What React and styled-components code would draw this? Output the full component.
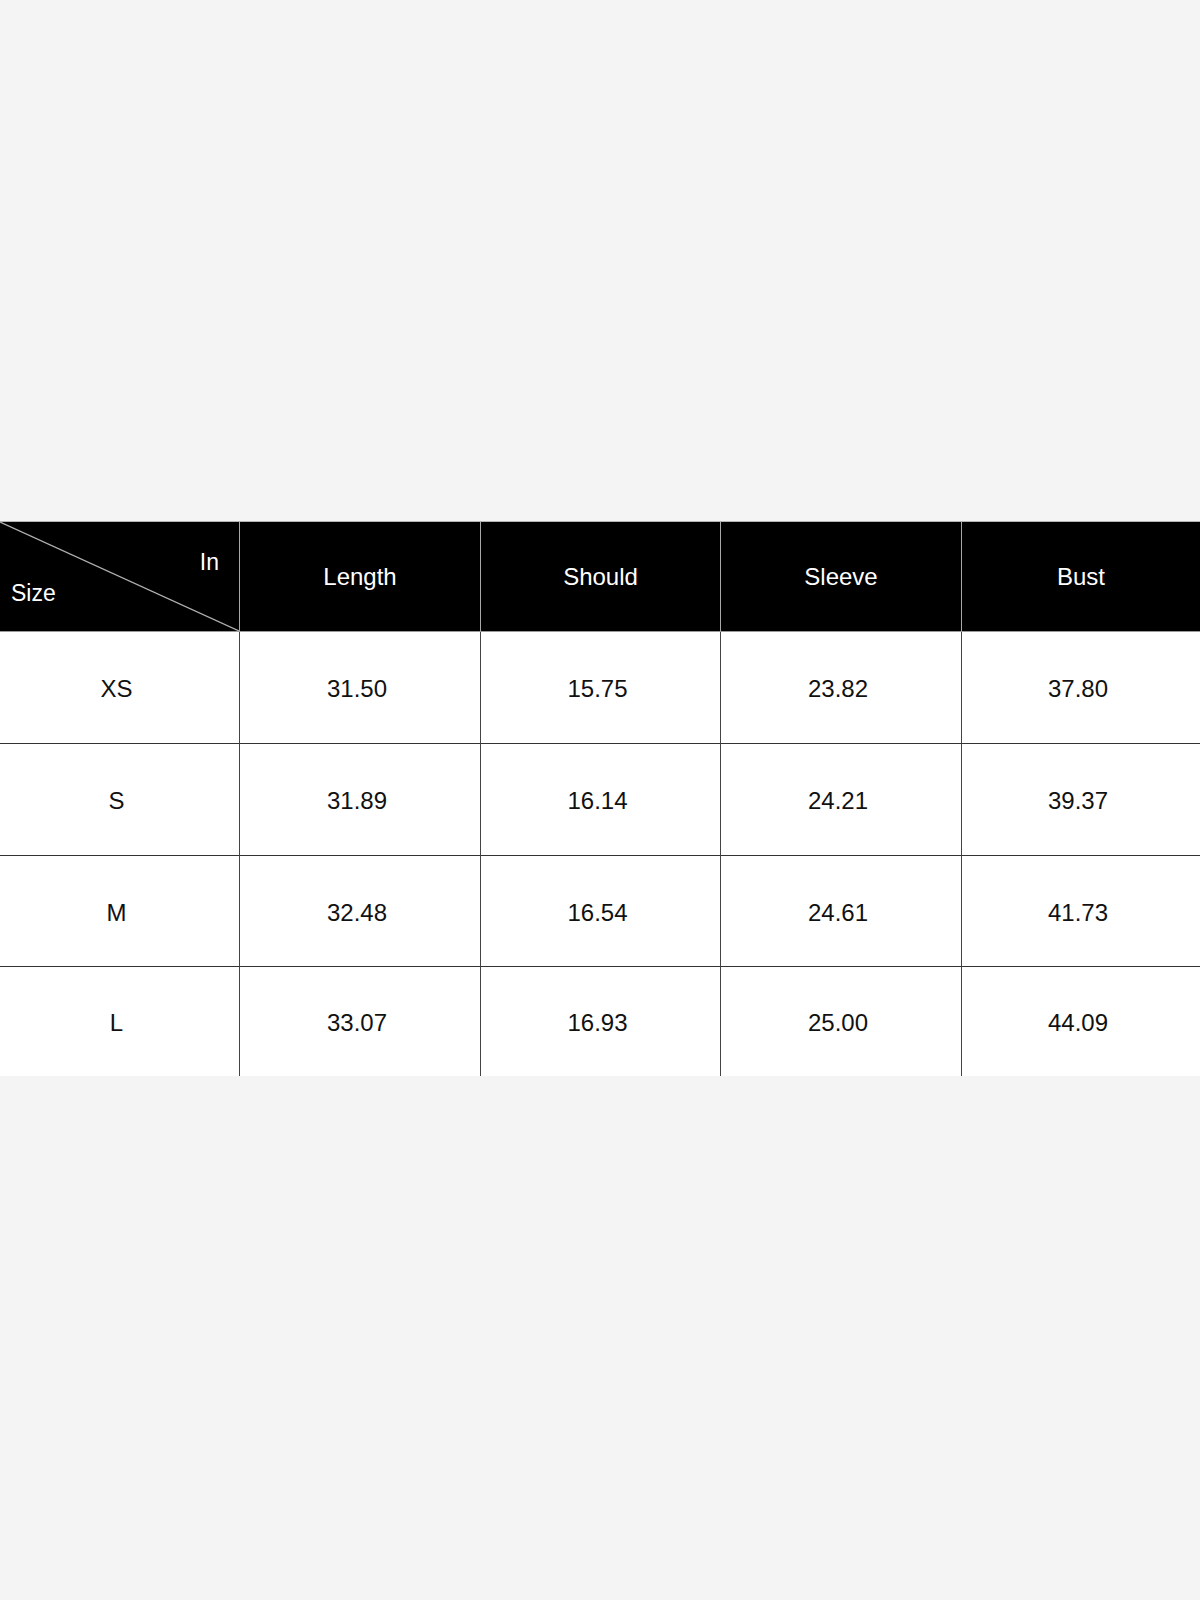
import React from "react";
import styled, { createGlobalStyle } from "styled-components";

const Global = createGlobalStyle`
  html, body { margin: 0; padding: 0; background: #f4f4f4; }
  body { font-family: "Liberation Sans", Arial, sans-serif; }
`;

const Page = styled.div`
  width: 1200px;
  height: 1600px;
  padding-top: 521px;
  box-sizing: border-box;
  background: #f4f4f4;
`;

const Table = styled.div`
  display: grid;
  grid-template-columns: 240px 241px 240px 241px 1fr;
  grid-template-rows: 111px 112px 112px 111px 109px;
  width: 1200px;
  background: #fff;
`;

const HeadCell = styled.div`
  position: relative;
  box-sizing: border-box;
  background: #000;
  color: #fff;
  border-top: 1px solid #b4b4b4;
  border-bottom: 1px solid #9a9a9a;
  border-right: ${(p) => (p.$last ? "none" : "1px solid #a8a8a8")};
  display: flex;
  align-items: center;
  justify-content: center;
  font-size: 24px;
  line-height: 26px;
`;

const CornerCell = styled(HeadCell)`
  flex-direction: column;
  align-items: stretch;
  justify-content: flex-start;
  padding-top: 27px;
  gap: 5px;
  font-size: 23px;
`;

const Diagonal = styled.svg`
  position: absolute;
  inset: 0;
  width: 100%;
  height: 100%;
`;

const CornerLabel = styled.span`
  position: relative;
  display: block;
  text-align: ${(p) => (p.$right ? "right" : "left")};
  padding: ${(p) => (p.$right ? "0 20px 0 0" : "0 0 0 11px")};
`;

const BodyCell = styled.div`
  box-sizing: border-box;
  background: #fff;
  color: #111;
  border-bottom: ${(p) => (p.$lastRow ? "none" : "1px solid #333")};
  border-right: ${(p) => (p.$last ? "none" : "1px solid #444")};
  display: flex;
  align-items: center;
  justify-content: center;
  padding: 3px 6px 0 0;
  font-size: 24px;
  line-height: 26px;
`;

const headers = ["Length", "Should", "Sleeve", "Bust"];
const rows = [
  ["XS", "31.50", "15.75", "23.82", "37.80"],
  ["S", "31.89", "16.14", "24.21", "39.37"],
  ["M", "32.48", "16.54", "24.61", "41.73"],
  ["L", "33.07", "16.93", "25.00", "44.09"],
];

export default function App() {
  return (
    <>
      <Global />
      <Page>
        <Table>
          <CornerCell>
            <Diagonal viewBox="0 0 240 109" preserveAspectRatio="none">
              <line x1="0" y1="0" x2="240" y2="109" stroke="#b0b0b0" strokeWidth="1.2" />
            </Diagonal>
            <CornerLabel $right>In</CornerLabel>
            <CornerLabel>Size</CornerLabel>
          </CornerCell>
          {headers.map((h, i) => (
            <HeadCell key={h} $last={i === headers.length - 1}>
              {h}
            </HeadCell>
          ))}
          {rows.map((r, ri) =>
            r.map((v, ci) => (
              <BodyCell
                key={`${ri}-${ci}`}
                $last={ci === r.length - 1}
                $lastRow={ri === rows.length - 1}
              >
                {v}
              </BodyCell>
            ))
          )}
        </Table>
      </Page>
    </>
  );
}
